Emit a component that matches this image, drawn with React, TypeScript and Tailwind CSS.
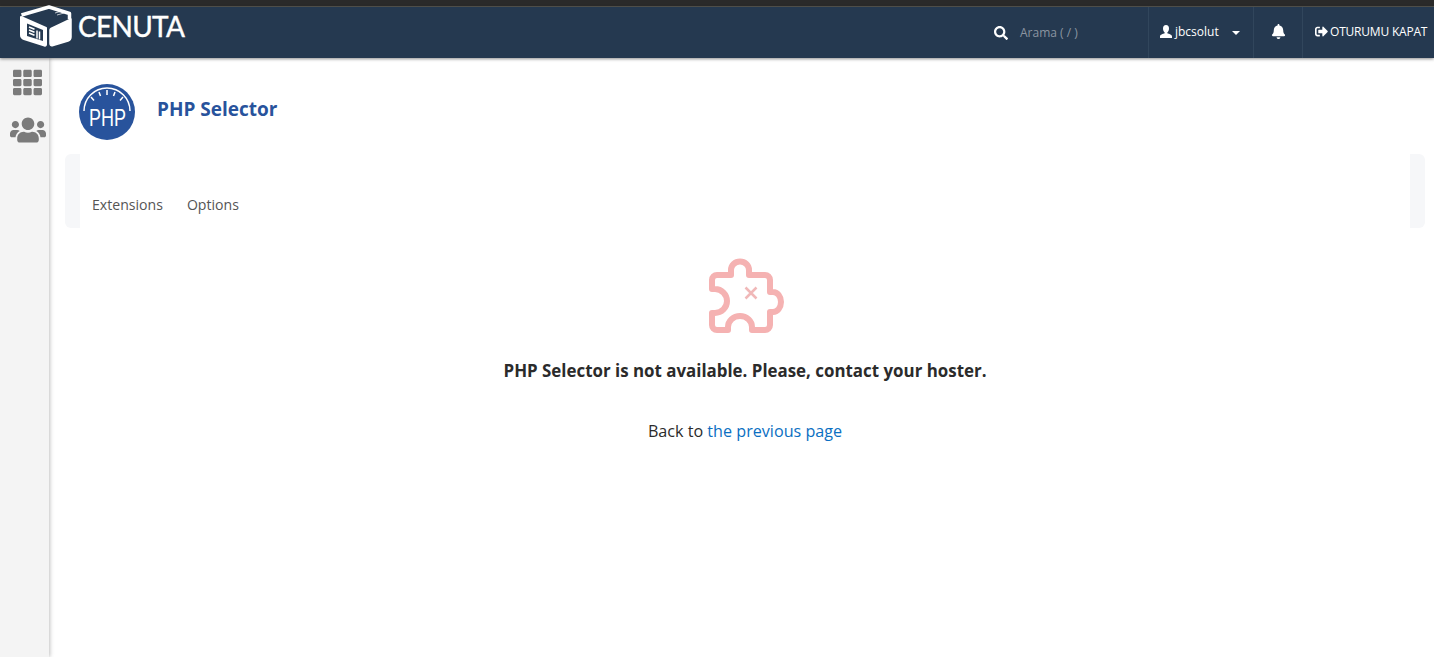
import { FaBell, FaSearch, FaSignOutAlt, FaTh, FaUsers } from "react-icons/fa";

function CubeLogo() {
  return (
    <svg width="54" height="42" viewBox="0 0 54 42" className="shrink-0">
      <path d="M2.500 10 L30 2 L50.500 8.500 V14" fill="none" stroke="#fff" strokeWidth="3.500" strokeLinejoin="round" />
      <path d="M2 12 L27 23 V39.500 Q27 41 25.500 40.500 L5 34 Q2 33 2 30 Z" fill="#fff" stroke="#fff" strokeWidth="2" strokeLinejoin="round" />
      <path d="M31 25 Q31 24 32 23.500 L52 14 V32 Q52 35 49 36 L34 40.500 Q31 41.500 31 38.500 Z" fill="#fff" stroke="#fff" strokeWidth="1.500" strokeLinejoin="round" />
      <path d="M8 18.500 L24 25 V36 L8 31 Z" fill="#253950" />
      <path d="M10 22 L15.500 24.200 M10 25 L15.500 27.200 M10 28 L15.500 30.200 M18 25.500 V33.500 M20.500 26.500 V34.500" stroke="#fff" strokeWidth="1.500" />
      <path d="M36 8 L43 6 M38 10 L45 8" stroke="#fff" strokeWidth="1" opacity="0.7" />
    </svg>
  );
}

function PhpBadge() {
  return (
    <svg width="56" height="56" viewBox="0 0 56 56" className="shrink-0">
      <circle cx="28" cy="28" r="28" fill="#28539c" />
      <path d="M5 27 A23 23 0 0 1 51 27" fill="none" stroke="#fff" strokeWidth="1.500" />
      <path d="M12 13 L15 16.500 M20 8 L21.500 12 M28 6 V11 M36 8 L34.500 12 M44 13 L41 16.500" stroke="#fff" strokeWidth="1.500" />
      <text transform="translate(10 42) scale(0.75 1)" fill="#fff" fontSize="24" fontFamily="'Liberation Sans', sans-serif">
        PHP
      </text>
    </svg>
  );
}

function PuzzleOff() {
  return (
    <svg width="110" height="100" viewBox="0 0 110 100" fill="none">
      <path
        d="M27 30 H41 V25 a9 8.500 0 0 1 18 0 V30 H75 a5 5 0 0 1 5 5 V47 h3 a8 10 0 0 1 0 20 h-3 V80 a5 5 0 0 1 -5 5 H62 V82 a12 11 0 0 0 -24 0 V85 H27 a5 5 0 0 1 -5 -5 V68 h3 a12 12 0 0 0 0 -24 h-3 V35 a5 5 0 0 1 5 -5 Z"
        stroke="#f5b2b2"
        strokeWidth="6"
        strokeLinejoin="round"
      />
      <path d="M55.500 42.500 L66.500 53.500 M66.500 42.500 L55.500 53.500" stroke="#f0b8b8" strokeWidth="2.500" />
    </svg>
  );
}

export default function App() {
  return (
    <div className="flex h-[657px] flex-col overflow-hidden bg-white font-['Open_Sans',sans-serif]">
      <div className="h-[7px] shrink-0 border-b border-[#55554f] bg-[#2a2a2a]" />
      <header className="z-20 flex h-[51px] shrink-0 justify-between bg-[#253950] shadow-[0_1px_3px_rgba(0,0,0,0.45)]">
        <div className="-mt-[2px] flex items-center self-start pl-[19px]">
          <CubeLogo />
          <span className="ml-[5px] font-['Lato',sans-serif] text-[28px] leading-none tracking-[-0.7px] text-white [-webkit-text-stroke:0.4px_#fff]">
            CENUTA
          </span>
        </div>
        <div className="flex h-full items-center text-xs text-white">
          <div className="flex h-full w-[154px] items-center">
            <FaSearch className="text-[14px]" />
            <span className="ml-[12px] mt-[1px] text-[#8b95a1]">Arama ( / )</span>
          </div>
          <div className="flex h-full w-[105px] items-center border-l border-[#31465c] pl-[11px] pb-[2px]">
            <svg width="12" height="13" viewBox="0 0 12 13" fill="#fff" className="shrink-0">
              <path d="M6 0 C8 0 9 1.500 9 3.500 C9 5.500 8 7 7.300 7.600 V8.300 C9 9 12 9.600 12 11.500 V13 H0 V11.500 C0 9.600 3 9 4.700 8.300 V7.600 C4 7 3 5.500 3 3.500 C3 1.500 4 0 6 0 Z" />
            </svg>
            <span className="ml-[3px]">jbcsolut</span>
            <span className="ml-[13px] mt-[3px] border-x-[4px] border-t-[4px] border-x-transparent border-t-white" />
          </div>
          <div className="flex h-full w-[49px] items-center justify-center border-l border-[#31465c] pb-[2px]">
            <FaBell className="text-[15px]" />
          </div>
          <div className="flex h-full w-[132px] items-center border-l border-[#31465c] pl-[12px] pb-[2px]">
            <FaSignOutAlt className="text-[13px]" />
            <span className="ml-[2px] whitespace-nowrap tracking-[-0.2px]">OTURUMU KAPAT</span>
          </div>
        </div>
      </header>
      <div className="flex flex-1">
        <aside className="z-10 flex w-[49px] shrink-0 flex-col items-center bg-[#f4f4f4] pl-[6px] pt-[10px] text-[#7b7b7b] shadow-[1px_0_4px_rgba(0,0,0,0.25)]">
          <FaTh className="text-[29px]" />
          <FaUsers className="mt-[15px] text-[36px]" />
        </aside>
        <main className="flex-1 pl-[16px] pr-[9px]">
          <div className="flex items-center gap-[22px] pl-[14px] pt-[26px]">
            <PhpBadge />
            <h1 className="-mt-[6px] text-[19px] font-bold text-[#28539c]">PHP Selector</h1>
          </div>
          <div className="mt-[14px] h-[74px] rounded-md bg-[#f6f7f9] px-[15px]">
            <nav className="flex h-full items-end gap-[24px] bg-white pb-[13px] pl-[12px] text-[14.100px] leading-[20px] text-[#555]">
              <span>Extensions</span>
              <span>Options</span>
            </nav>
          </div>
          <div className="flex flex-col items-center leading-[22px]">
            <div className="mt-[17px]">
              <PuzzleOff />
            </div>
            <p className="mt-[15px] text-[16.900px] font-bold text-[#2b2b2b]">PHP Selector is not available. Please, contact your hoster.</p>
            <p className="mt-[38px] text-[16.150px] text-[#2b2b2b]">
              Back to <a className="text-[#0b6fc2]">the previous page</a>
            </p>
          </div>
        </main>
      </div>
    </div>
  );
}
